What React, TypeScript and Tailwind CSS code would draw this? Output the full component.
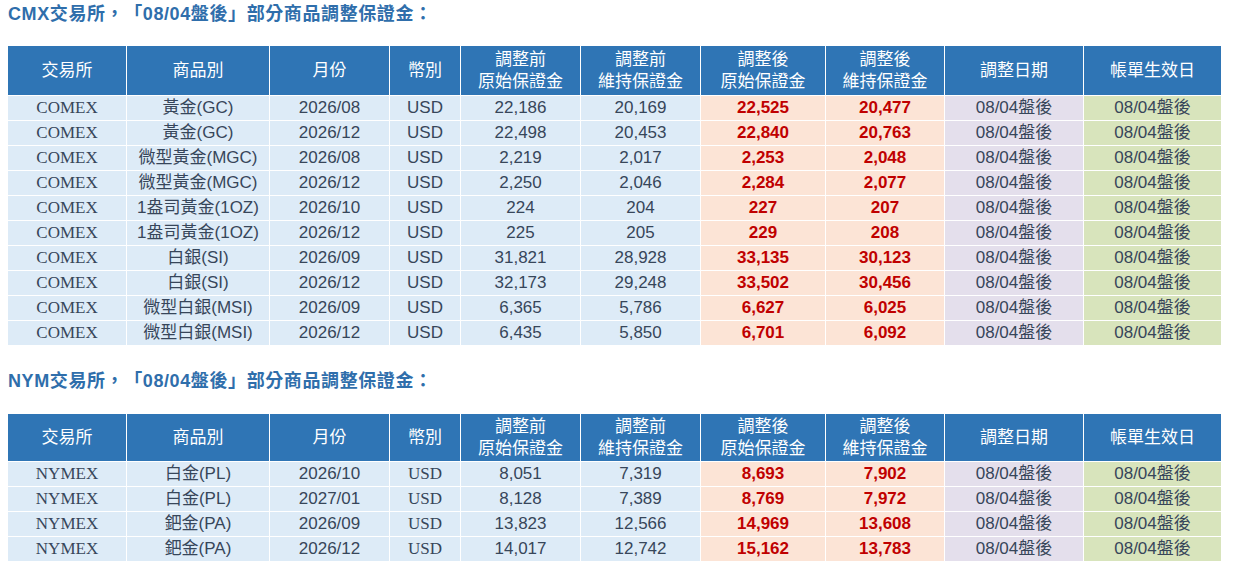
/**
 * Margin adjustment notice: CMX / NYM tables
 */

// ============================================================================
// Types
// ============================================================================

interface MarginRow {
  exchange: string
  product: string
  month: string
  before: [string, string]
  after: [string, string]
}

// ============================================================================
// Constants
// ============================================================================

const COL_WIDTHS = [119, 143, 120, 71, 120, 120, 125, 119, 139, 138]

const CMX_ROWS: MarginRow[] = [
  { exchange: 'COMEX', product: '黃金(GC)', month: '2026/08', before: ['22,186', '20,169'], after: ['22,525', '20,477'] },
  { exchange: 'COMEX', product: '黃金(GC)', month: '2026/12', before: ['22,498', '20,453'], after: ['22,840', '20,763'] },
  { exchange: 'COMEX', product: '微型黃金(MGC)', month: '2026/08', before: ['2,219', '2,017'], after: ['2,253', '2,048'] },
  { exchange: 'COMEX', product: '微型黃金(MGC)', month: '2026/12', before: ['2,250', '2,046'], after: ['2,284', '2,077'] },
  { exchange: 'COMEX', product: '1盎司黃金(1OZ)', month: '2026/10', before: ['224', '204'], after: ['227', '207'] },
  { exchange: 'COMEX', product: '1盎司黃金(1OZ)', month: '2026/12', before: ['225', '205'], after: ['229', '208'] },
  { exchange: 'COMEX', product: '白銀(SI)', month: '2026/09', before: ['31,821', '28,928'], after: ['33,135', '30,123'] },
  { exchange: 'COMEX', product: '白銀(SI)', month: '2026/12', before: ['32,173', '29,248'], after: ['33,502', '30,456'] },
  { exchange: 'COMEX', product: '微型白銀(MSI)', month: '2026/09', before: ['6,365', '5,786'], after: ['6,627', '6,025'] },
  { exchange: 'COMEX', product: '微型白銀(MSI)', month: '2026/12', before: ['6,435', '5,850'], after: ['6,701', '6,092'] },
]

const NYM_ROWS: MarginRow[] = [
  { exchange: 'NYMEX', product: '白金(PL)', month: '2026/10', before: ['8,051', '7,319'], after: ['8,693', '7,902'] },
  { exchange: 'NYMEX', product: '白金(PL)', month: '2027/01', before: ['8,128', '7,389'], after: ['8,769', '7,972'] },
  { exchange: 'NYMEX', product: '鈀金(PA)', month: '2026/09', before: ['13,823', '12,566'], after: ['14,969', '13,608'] },
  { exchange: 'NYMEX', product: '鈀金(PA)', month: '2026/12', before: ['14,017', '12,742'], after: ['15,162', '13,783'] },
]

const SANS = "font-['Liberation_Sans','Noto_Sans_CJK_TC',sans-serif]"
const SERIF = "font-['Liberation_Serif','Noto_Sans_CJK_TC',serif]"

// ============================================================================
// Components
// ============================================================================

function Title({ children }: { children: React.ReactNode }) {
  return (
    <h2 className="text-[18px] leading-[26px] font-bold tracking-[0.6px] text-[#2f6eab] pl-[8px] [text-spacing-trim:space-all]">
      {children}
    </h2>
  )
}

function MarginTable({ rows, headerHeight, serifCurrency }: { rows: MarginRow[]; headerHeight: string; serifCurrency: boolean }) {
  const th = `border border-white bg-[#2f75b5] text-white font-normal text-[17px] leading-[22px] text-center ${headerHeight}`
  const td = 'border border-white h-[25px] p-0 text-center leading-[24px] text-[17px] text-[#37465a]'

  return (
    <table className="table-fixed border-collapse w-[1214px] ml-[7px]">
      <colgroup>
        {COL_WIDTHS.map((w, i) => (
          <col key={i} style={{ width: w }} />
        ))}
      </colgroup>
      <thead>
        <tr>
          <th className={th}>交易所</th>
          <th className={th}>商品別</th>
          <th className={th}>月份</th>
          <th className={th}>幣別</th>
          <th className={th}>調整前<br />原始保證金</th>
          <th className={th}>調整前<br />維持保證金</th>
          <th className={th}>調整後<br />原始保證金</th>
          <th className={th}>調整後<br />維持保證金</th>
          <th className={th}>調整日期</th>
          <th className={th}>帳單生效日</th>
        </tr>
      </thead>
      <tbody>
        {rows.map((r, i) => (
          <tr key={i}>
            <td className={`${td} bg-[#ddebf7] ${SERIF}`}>{r.exchange}</td>
            <td className={`${td} bg-[#ddebf7]`}>{r.product}</td>
            <td className={`${td} bg-[#ddebf7]`}>{r.month}</td>
            <td className={`${td} bg-[#ddebf7] ${serifCurrency ? SERIF : ''}`}>USD</td>
            <td className={`${td} bg-[#ddebf7]`}>{r.before[0]}</td>
            <td className={`${td} bg-[#ddebf7]`}>{r.before[1]}</td>
            <td className={`${td} bg-[#fce4d6] font-bold !text-[#c00000]`}>{r.after[0]}</td>
            <td className={`${td} bg-[#fce4d6] font-bold !text-[#c00000]`}>{r.after[1]}</td>
            <td className={`${td} bg-[#e4dfec]`}>08/04盤後</td>
            <td className={`${td} bg-[#d8e4bc]`}>08/04盤後</td>
          </tr>
        ))}
      </tbody>
    </table>
  )
}

export default function App() {
  return (
    <div lang="zh-TW" className={`w-[1234px] h-[567px] bg-white overflow-hidden ${SANS}`}>
      <div className="pt-[1px]">
        <Title>CMX交易所，「08/04盤後」部分商品調整保證金：</Title>
      </div>
      <div className="mt-[18px]">
        <MarginTable rows={CMX_ROWS} headerHeight="h-[50px]" serifCurrency={false} />
      </div>
      <div className="mt-[22px]">
        <Title>NYM交易所，「08/04盤後」部分商品調整保證金：</Title>
      </div>
      <div className="mt-[19px]">
        <MarginTable rows={NYM_ROWS} headerHeight="h-[48px]" serifCurrency={true} />
      </div>
    </div>
  )
}
